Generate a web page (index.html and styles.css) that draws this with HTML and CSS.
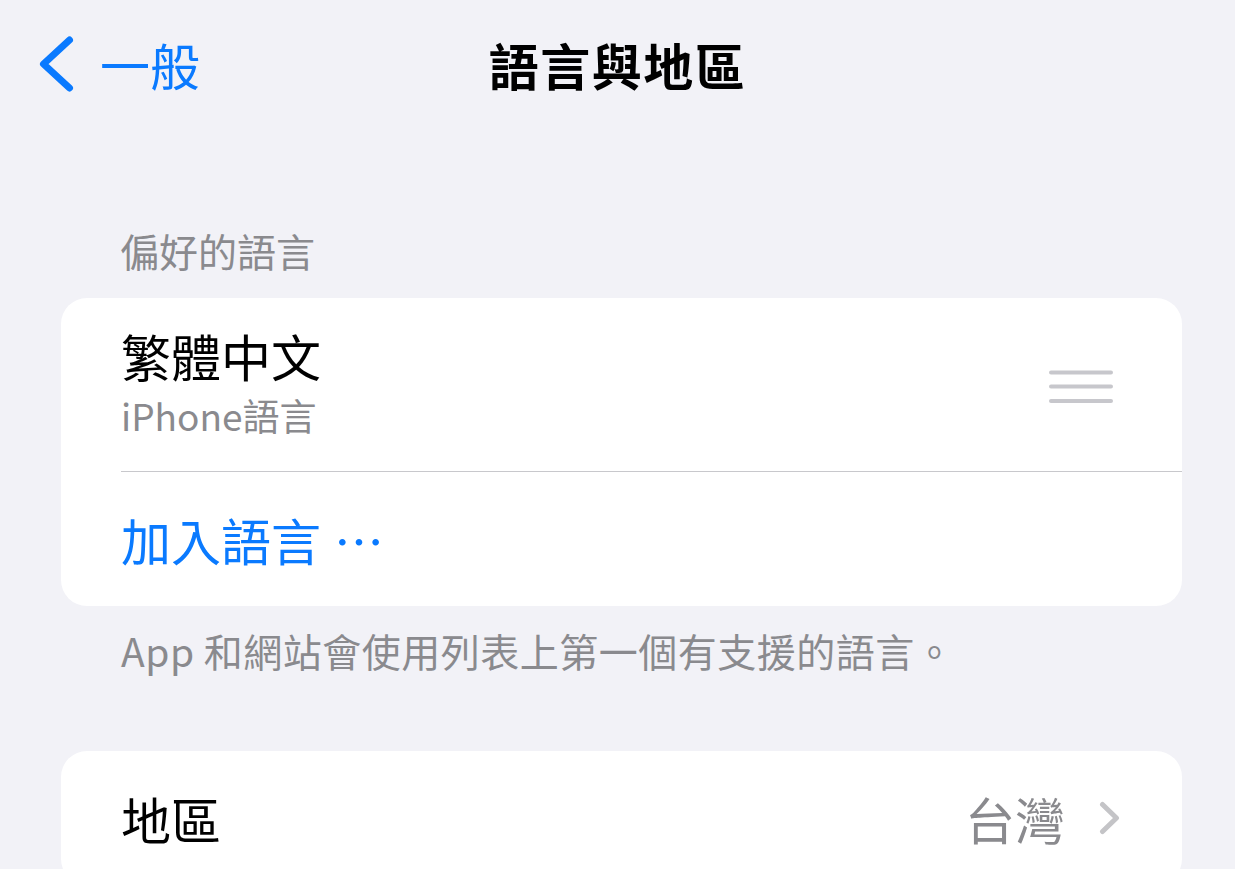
FILE: index.html
```html
<!DOCTYPE html>
<html lang="zh-Hant">
<head>
<meta charset="utf-8">
<title>語言與地區</title>
<link rel="stylesheet" href="styles.css">
</head>
<body>
<header class="nav">
  <div class="back">
    <svg class="back-chevron" width="40" height="60" viewBox="0 0 40 60" aria-hidden="true">
      <polyline points="33.5,6 7.5,30 33.5,54" fill="none" stroke="#0a7aff" stroke-width="7" stroke-linecap="round" stroke-linejoin="round"/>
    </svg>
    <span class="back-label">一般</span>
  </div>
  <h1 class="title">語言與地區</h1>
  <div class="nav-spacer"></div>
</header>

<main class="content">
  <section class="group group-lang">
    <h2 class="group-header">偏好的語言</h2>
    <div class="card">
      <div class="row row-lang">
        <div class="lang-text">
          <div class="lang-name">繁體中文</div>
          <div class="lang-sub">iPhone語言</div>
        </div>
        <svg class="handle" width="64" height="34" viewBox="0 0 64 34" aria-hidden="true">
          <line x1="2" y1="2.5" x2="62" y2="2.5" stroke="#c7c7cc" stroke-width="4" stroke-linecap="round"/>
          <line x1="2" y1="16.5" x2="62" y2="16.5" stroke="#c7c7cc" stroke-width="4" stroke-linecap="round"/>
          <line x1="2" y1="31" x2="62" y2="31" stroke="#c7c7cc" stroke-width="4" stroke-linecap="round"/>
        </svg>
      </div>
      <div class="separator"></div>
      <div class="row row-add">
        <span class="add-link">加入語言<span class="ellipsis">…</span></span>
      </div>
    </div>
    <p class="group-footer">App 和網站會使用列表上第一個有支援的語言。</p>
  </section>

  <section class="group group-region">
    <div class="card">
      <div class="row row-region">
        <span class="row-label">地區</span>
        <span class="row-value">台灣</span>
        <svg class="disclosure" width="21" height="34" viewBox="0 0 21 34" aria-hidden="true">
          <polyline points="3.5,3.5 17.5,17 3.5,30.5" fill="none" stroke="#c4c4c7" stroke-width="5" stroke-linecap="round" stroke-linejoin="round"/>
        </svg>
      </div>
    </div>
  </section>
</main>
</body>
</html>
```

FILE: styles.css
```css
html, body {
  margin: 0;
  padding: 0;
}

body {
  background: #f2f2f7;
  font-family: "Noto Sans CJK TC", "Noto Sans", sans-serif;
  color: #000;
  width: 1235px;
  height: 869px;
  overflow: hidden;
}

.nav {
  display: grid;
  grid-template-columns: 1fr auto 1fr;
  align-items: center;
  height: 128px;
}

.back {
  display: flex;
  align-items: center;
  padding-left: 36px;
}

.back-chevron {
  display: block;
}

.back-label {
  margin-left: 24px;
  font-size: 50px;
  line-height: 50px;
  color: #0a7aff;
}

.title {
  margin: 0;
  font-size: 50px;
  line-height: 50px;
  font-weight: 700;
  letter-spacing: 1.5px;
}

.content {
  padding-left: 61px;
  width: 1121px;
}

.group-header {
  margin: 103px 0 0 59px;
  font-size: 39px;
  line-height: 39px;
  font-weight: 400;
  color: #8a8a8e;
}

.card {
  background: #fff;
  border-radius: 26px;
}

.group-lang .card {
  margin-top: 28px;
}

.row {
  display: flex;
  align-items: center;
  padding-left: 60px;
}

.row-lang {
  height: 173px;
  padding-right: 69px;
  justify-content: space-between;
}

.lang-text {
  display: flex;
  flex-direction: column;
  padding-bottom: 6px;
}

.lang-name {
  font-size: 50px;
  line-height: 50px;
}

.lang-sub {
  margin-top: 17px;
  font-size: 37px;
  line-height: 37px;
  color: #8a8a8e;
}

.handle {
  display: block;
  margin-top: 4px;
}

.separator {
  height: 1px;
  margin-left: 60px;
  background: #c8c8cc;
}

.row-add {
  height: 134px;
}

.add-link {
  font-size: 50px;
  line-height: 50px;
  color: #0a7aff;
}

.ellipsis {
  margin-left: 13px;
}

.group-footer {
  margin: 25px 0 0 60px;
  font-size: 39px;
  line-height: 39px;
  letter-spacing: 0.5px;
  color: #8a8a8e;
}

.group-region .card {
  margin-top: 81px;
}

.row-region {
  height: 134px;
  padding-right: 62px;
}

.row-label {
  flex: 1;
  font-size: 50px;
  line-height: 50px;
}

.row-value {
  font-size: 50px;
  line-height: 50px;
  color: #8a8a8e;
  margin-right: 34px;
}

.disclosure {
  display: block;
}
```
